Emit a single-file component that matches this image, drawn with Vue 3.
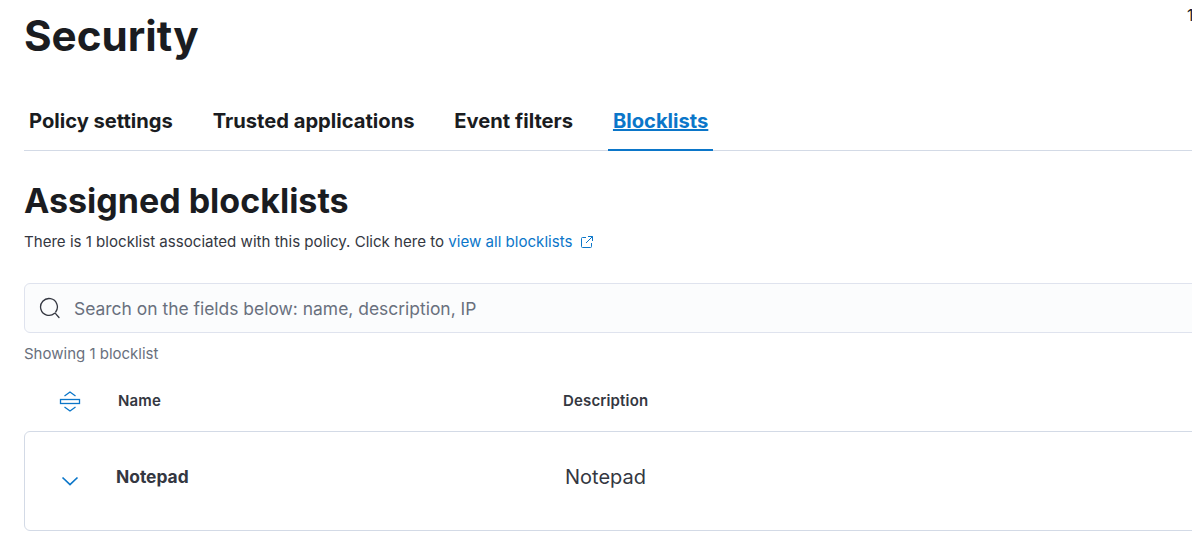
<script setup>
const tabs = ['Policy settings', 'Trusted applications', 'Event filters', 'Blocklists']
</script>

<template>
  <div class="page">
    <span class="corner">1</span>
    <header class="head">
      <h1 class="title">Security</h1>
    </header>
    <nav class="tabs">
      <a v-for="t in tabs" :key="t" class="tab" :class="{ active: t === 'Blocklists' }">
        <span class="tab-label">{{ t }}</span>
      </a>
    </nav>
    <section class="body">
      <h2 class="sub">Assigned blocklists</h2>
      <p class="desc">
        There is 1 blocklist associated with this policy. Click here to
        <a class="link">view all blocklists
          <svg class="ext" viewBox="0 0 14 14" width="14" height="14" fill="none" stroke="currentColor" stroke-width="1">
            <path d="M6 2.5H2.5a1 1 0 0 0-1 1v8a1 1 0 0 0 1 1h8a1 1 0 0 0 1-1V8" />
            <path d="M8 1.5h4.5V6M12.5 1.5 6 8" />
          </svg>
        </a>
      </p>
      <div class="search">
        <svg class="search-icon" viewBox="0 0 22 22" width="22" height="22" fill="none" stroke="#343741" stroke-width="1.3" stroke-linecap="round">
          <path d="M15.6 16.2A8.4 8.4 0 1 1 16.7 15" />
          <path d="M16.6 16.6 20 20.5" />
        </svg>
        <span class="placeholder">Search on the fields below: name, description, IP</span>
      </div>
      <div class="count">Showing 1 blocklist</div>
      <div class="thead">
        <span class="cell-icon">
          <svg class="expand-icon" viewBox="0 0 22 22" width="22" height="22" fill="none" stroke="#0b76c9" stroke-width="1.3">
            <path d="M5.5 5 11 1l5.5 4" />
            <rect x="1.5" y="8.5" width="19" height="4" />
            <path d="M5.5 16 11 20l5.5-4" />
          </svg>
        </span>
        <span class="th name">Name</span>
        <span class="th">Description</span>
      </div>
      <div class="row">
        <span class="cell-icon">
          <svg viewBox="0 0 18 10" width="18" height="10" fill="none" stroke="#0b76c9" stroke-width="1.7">
            <path d="M1.5 1.5 9 8.5l7.5-7" />
          </svg>
        </span>
        <span class="row-name">Notepad</span>
        <span class="row-desc">Notepad</span>
      </div>
    </section>
  </div>
</template>

<style>
html, body { margin: 0; background: #fff; overflow: hidden; }
</style>

<style scoped>
.page {
  position: relative;
  width: 1192px;
  height: 542px;
  overflow: hidden;
  padding-left: 24px;
  box-sizing: border-box;
  font-family: Inter, "Liberation Sans", sans-serif;
  color: #1a1c21;
  background: #fff;
}
.corner {
  position: absolute;
  left: 1187px;
  top: 5px;
  font-size: 16px;
  line-height: 20px;
}
.head { height: 71px; }
.title {
  margin: 0;
  padding-top: 11px;
  font-size: 42.2px;
  line-height: 50px;
  font-weight: 700;
}
.tabs {
  display: flex;
  gap: 29.9px;
  height: 80px;
  box-sizing: border-box;
  border-bottom: 1px solid #d3dae6;
}
.tab {
  display: flex;
  align-items: flex-start;
  padding: 37px 5px 0;
  height: 80px;
  box-sizing: border-box;
  font-size: 20.15px;
  line-height: 25px;
  font-weight: 700;
}
.tab.active {
  color: #0b76c9;
  border-bottom: 2px solid #0b76c9;
}
.tab.active .tab-label {
  text-decoration: underline;
  text-decoration-thickness: 2px;
}
.sub {
  margin: 28px 0 0;
  font-size: 34px;
  line-height: 44px;
  font-weight: 700;
}
.desc {
  margin: 9px 0 0;
  font-size: 15.08px;
  line-height: 20px;
  color: #343741;
}
.link { color: #0b76c9; }
.ext { vertical-align: -2px; margin-left: 3px; }
.search {
  display: flex;
  align-items: center;
  margin-top: 31px;
  width: 1200px;
  height: 50px;
  box-sizing: border-box;
  padding-left: 14px;
  background: #fbfcfd;
  border: 1px solid #dfe3ee;
  border-radius: 6px;
}
.placeholder {
  margin-left: 13px;
  font-size: 17.45px;
  color: #69707d;
}
.count {
  margin-top: 11px;
  font-size: 15px;
  line-height: 20px;
  color: #69707d;
}
.thead {
  display: flex;
  align-items: center;
  height: 40px;
  margin-top: 16px;
  font-size: 15px;
  font-weight: 600;
  color: #343741;
}
.cell-icon {
  display: flex;
  justify-content: center;
  width: 92px;
  flex: none;
}
.expand-icon { margin-top: 3px; }
.th.name { width: 445px; margin-left: 2px; }
.th { letter-spacing: 0.01em; }
.row {
  display: flex;
  align-items: center;
  width: 1200px;
  height: 100px;
  box-sizing: border-box;
  margin-top: 11px;
  padding-bottom: 8px;
  border: 1px solid #d3dae6;
  border-radius: 6px;
  color: #343741;
}
.row .cell-icon { width: 90px; margin-top: 8px; }
.row-name { width: 449px; margin-left: 1px; margin-bottom: 2px; font-size: 17.4px; font-weight: 700; }
.row-desc { font-size: 20px; }
</style>
